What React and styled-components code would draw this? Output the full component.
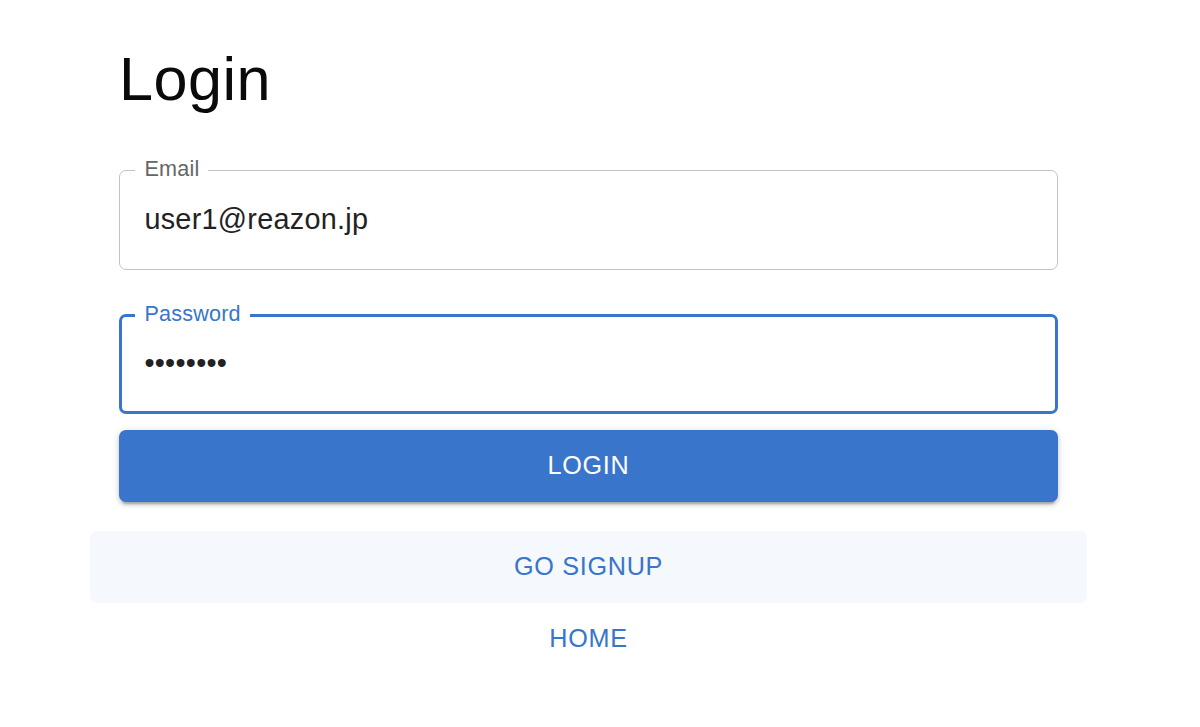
import React from "react";
import styled, { createGlobalStyle } from "styled-components";

const Global = createGlobalStyle`
  html, body { margin: 0; padding: 0; background: #fff; }
  body { font-family: "Liberation Sans", Arial, sans-serif; }
  * { box-sizing: border-box; }
`;

const BLUE = "#3875cb";

const Main = styled.main`
  width: 939px;
  margin-left: 119px;
  padding-top: 42px;
  display: flex;
  flex-direction: column;
`;

const Title = styled.h1`
  margin: 0;
  font-size: 61.2px;
  line-height: 75.6px;
  font-weight: 400;
  letter-spacing: 0.45px;
  color: #0a0a0a;
`;

const Form = styled.form`
  display: flex;
  flex-direction: column;
  margin-top: 52px;
`;

const Field = styled.div`
  position: relative;
  height: 100px;
  margin-top: ${(p) => p.$mt || 0}px;
  border: ${(p) => (p.$focused ? `3.6px solid ${BLUE}` : "1.6px solid #c4c4c4")};
  border-radius: 7px;
  display: flex;
  align-items: center;
  padding-left: ${(p) => (p.$focused ? 22.4 : 24.4)}px;
`;

const Label = styled.label`
  position: absolute;
  top: ${(p) => (p.$focused ? -14 : -12.2)}px;
  left: ${(p) => (p.$focused ? 13.4 : 15.4)}px;
  padding: 0 9px;
  background: #fff;
  font-size: 21.6px;
  line-height: 1;
  letter-spacing: 0.2px;
  color: ${(p) => (p.$focused ? BLUE : "#666")};
`;

const Input = styled.input`
  border: 0;
  outline: none;
  padding: 0;
  width: 100%;
  background: transparent;
  font-family: "Liberation Sans", Arial, sans-serif;
  font-size: 28.8px;
  letter-spacing: 0.27px;
  color: #222;
`;

const PrimaryButton = styled.button`
  margin-top: 16px;
  height: 72px;
  border: 0;
  border-radius: 7px;
  background: ${BLUE};
  color: #fff;
  font-family: "Liberation Sans", Arial, sans-serif;
  font-size: 25.2px;
  font-weight: 500;
  letter-spacing: 0.72px;
  text-transform: uppercase;
  box-shadow: 0 5px 2px -3px rgba(0, 0, 0, 0.2), 0 3px 4px 0 rgba(0, 0, 0, 0.14),
    0 1px 9px 0 rgba(0, 0, 0, 0.12);
  cursor: pointer;
`;

const TextButton = styled.button`
  height: 72px;
  margin: ${(p) => (p.$hover ? "29px -29px 0" : "0")};
  border: 0;
  border-radius: 7px;
  background: ${(p) => (p.$hover ? "#f5f8fc" : "transparent")};
  color: ${BLUE};
  font-family: "Liberation Sans", Arial, sans-serif;
  font-size: 25.2px;
  font-weight: 500;
  letter-spacing: 0.72px;
  text-transform: uppercase;
  cursor: pointer;
`;

export default function App() {
  return (
    <>
      <Global />
      <Main>
        <Title>Login</Title>
        <Form onSubmit={(e) => e.preventDefault()}>
          <Field>
            <Label htmlFor="email">Email</Label>
            <Input id="email" type="text" defaultValue="user1@reazon.jp" />
          </Field>
          <Field $focused $mt={44}>
            <Label $focused htmlFor="password">Password</Label>
            <Input id="password" type="password" defaultValue="password" />
          </Field>
          <PrimaryButton type="submit">Login</PrimaryButton>
        </Form>
        <TextButton $hover>Go Signup</TextButton>
        <TextButton>Home</TextButton>
      </Main>
    </>
  );
}
